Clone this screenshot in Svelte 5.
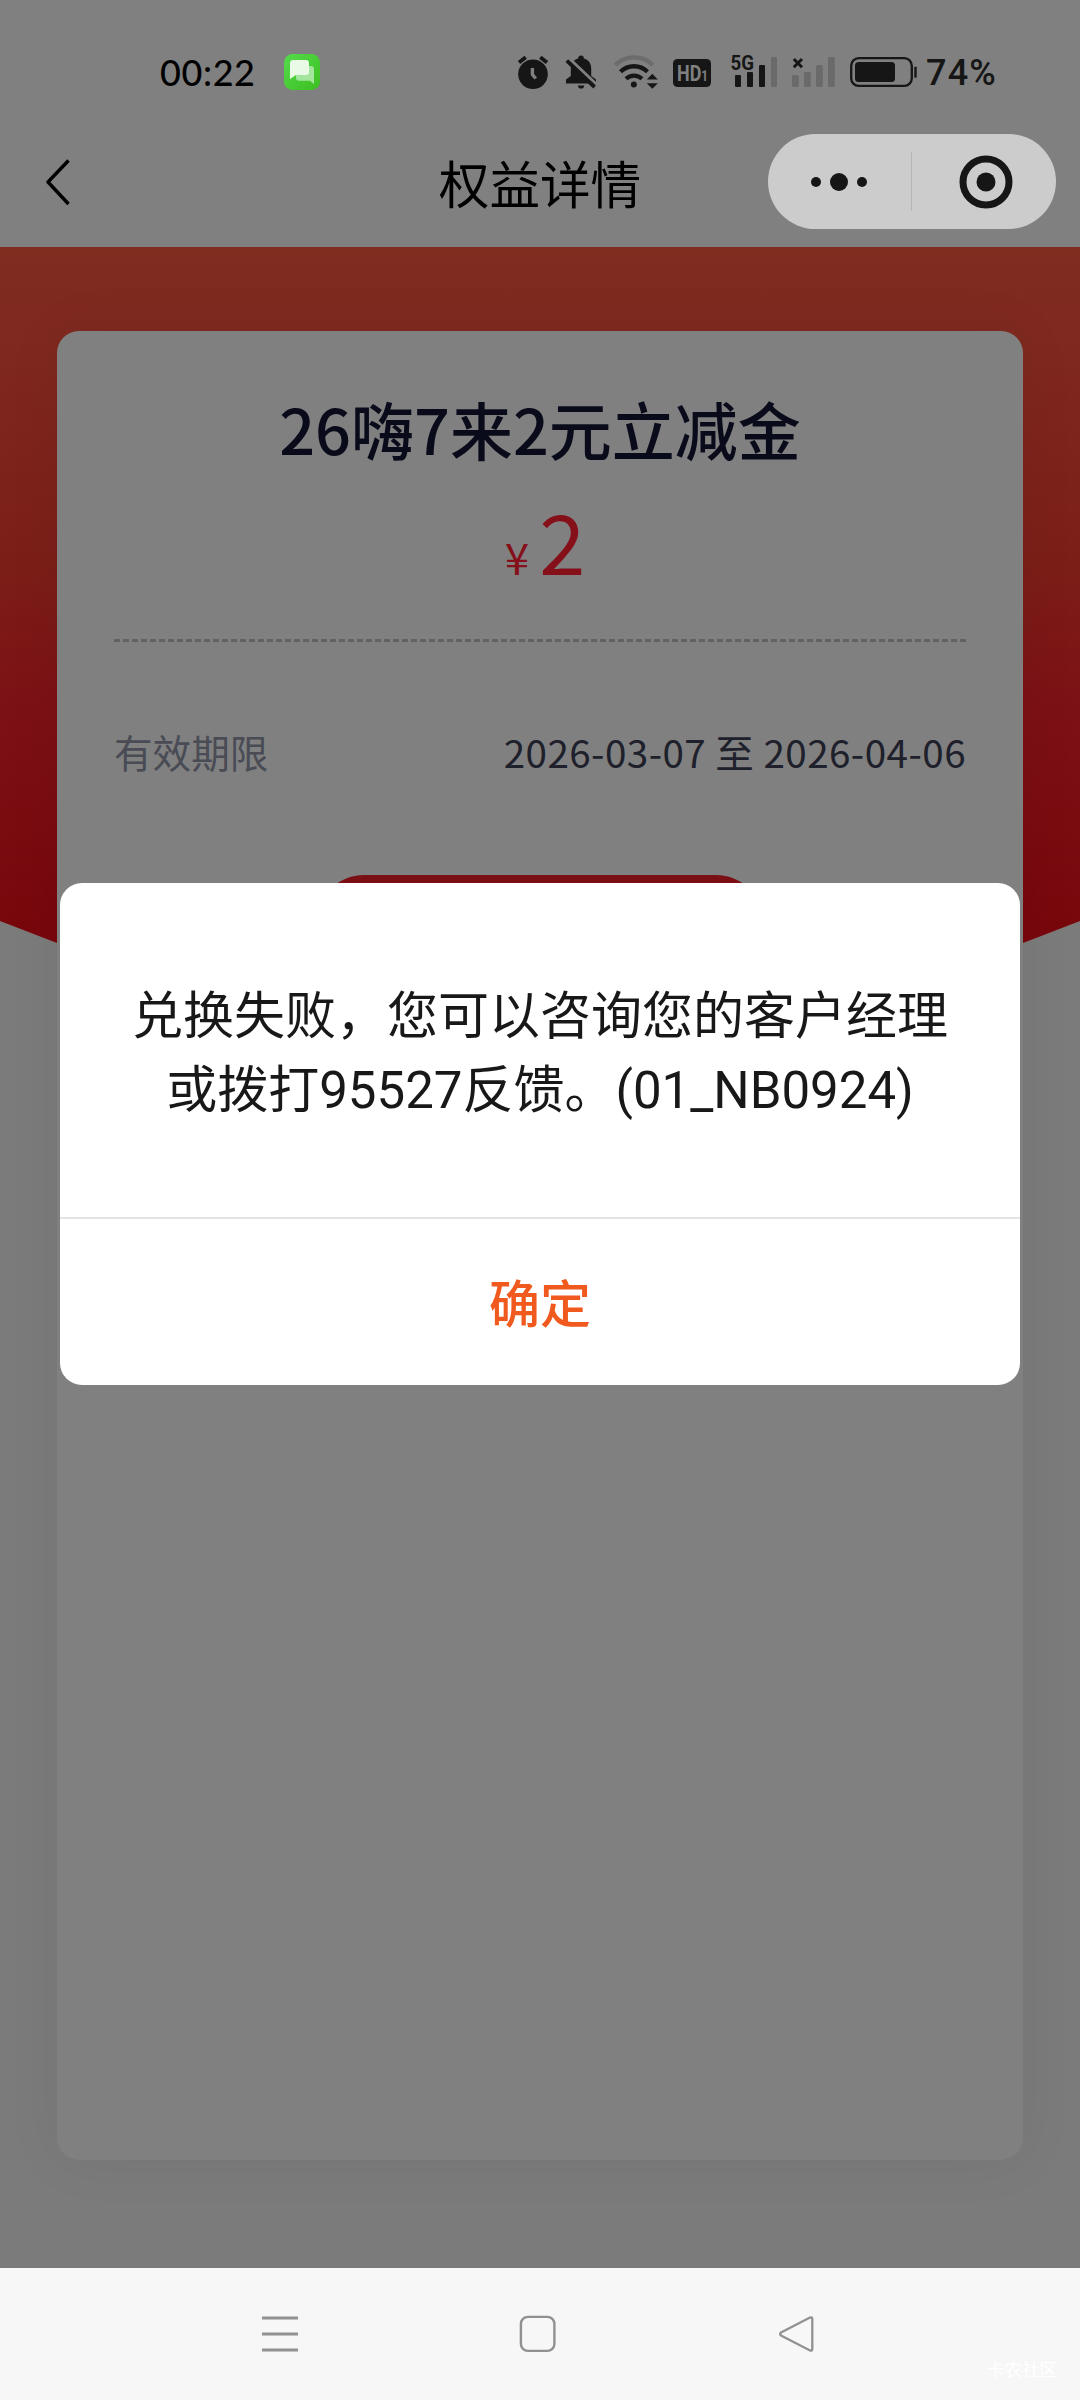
<script>
  const benefit = {
    title: '26嗨7来2元立减金',
    amount: '2',
    label: '有效期限',
    period: '2026-03-07 至 2026-04-06'
  };
  const message = ['兑换失败，您可以咨询您的客户经理', '或拨打95527反馈。(01_NB0924)'];
  const bars = [
    { x: 0, h: 12 },
    { x: 12, h: 15 },
    { x: 24, h: 22 },
    { x: 36, h: 30 }
  ];
</script>

<div class="screen">
  <div class="status">
    <span class="time">00:22</span>
    <svg class="chat" viewBox="0 0 36 36" width="36" height="36">
      <defs>
        <linearGradient id="green" x1="0" y1="0" x2="1" y2="1">
          <stop offset="0" stop-color="#55da4c" /><stop offset="1" stop-color="#3cbf20" />
        </linearGradient>
      </defs>
      <rect width="36" height="36" rx="8.5" fill="url(#green)" />
      <path d="M15 12h12a3 3 0 0 1 3 3v15l-4-3.200H15a3 3 0 0 1-3-3V15a3 3 0 0 1 3-3z" fill="#a4e59d" />
      <path d="M9 6h13a3 3 0 0 1 3 3v9a3 3 0 0 1-3 3H12l-6 4V9a3 3 0 0 1 3-3z" fill="#e9fbe7" />
    </svg>

    <svg class="alarm" viewBox="517 54 32 36" width="32" height="36">
      <circle cx="533" cy="74.300" r="14.800" fill="#161616" />
      <path d="M519 62.500l6.700-5.300M547 62.500l-6.700-5.300" stroke="#161616" stroke-width="3.800" />
      <path d="M532.400 68v6.500l3.300 4" fill="none" stroke="#808080" stroke-width="3.400" />
    </svg>
    <svg class="bell" viewBox="565 54 32 36" width="32" height="36">
      <path d="M566 83.500v-4l4.800-3.500V68c0-5 3-8.500 7.400-9.600a2.800 2.800 0 0 1 5.600 0c4.400 1.100 7.400 4.600 7.400 9.600v8l4.800 3.500v4z" fill="#161616" />
      <path d="M578 85.500h6.200a3.100 3.100 0 0 1-6.200 0z" fill="#161616" />
      <path d="M569 58.500l29 27.500" stroke="#808080" stroke-width="3.200" />
      <path d="M566.800 60.700l27.800 26.300" stroke="#161616" stroke-width="3.800" />
    </svg>
    <svg class="wifi" viewBox="613 54 46 36" width="46" height="36">
      <g fill="none" stroke-width="4.300">
        <path d="M615.200 65a27 27 0 0 1 37.600 0" stroke="#6c6c6c" />
        <path d="M620.500 71.800a19.200 19.200 0 0 1 27 0" stroke="#161616" />
        <path d="M626 78.800a11.500 11.500 0 0 1 16 0" stroke="#161616" />
      </g>
      <circle cx="633.800" cy="84.600" r="3" fill="#161616" />
      <path d="M646.800 79.600l5.500-5.800 5.500 5.800zM646.800 83.200l5.500 5.500 5.500-5.500z" fill="#161616" />
    </svg>
    <svg class="hd" viewBox="0 0 38 28" width="38" height="28">
      <rect width="38" height="28" rx="4.500" fill="#161616" />
      <text x="4" y="21.800" font-size="21.500" font-weight="700" textLength="31" lengthAdjust="spacingAndGlyphs" fill="#808080">HD<tspan font-size="14">1</tspan></text>
    </svg>
    <svg class="five" viewBox="-4 -2 47 34" width="47" height="34">
      {#each bars as b, i}
        <rect x={b.x} y={30 - b.h} width="6" height={b.h} rx="1" fill={i < 3 ? '#161616' : '#6a6a6a'} />
      {/each}
      <text x="-4.500" y="12.800" font-size="20.500" font-weight="700" textLength="23.500" lengthAdjust="spacingAndGlyphs" fill="#161616">5G</text>
    </svg>
    <svg class="none" viewBox="0 -2 43 34" width="43" height="34">
      {#each bars as b}
        <rect x={b.x} y={30 - b.h} width="6.800" height={b.h} rx="1.500" fill="#6a6a6a" />
      {/each}
      <path d="M1.800 2l8.200 8.200M10 2l-8.200 8.200" stroke="#161616" stroke-width="3" />
    </svg>
    <svg class="battery" viewBox="0 0 67 30" width="67" height="30">
      <rect x="1.200" y="1.200" width="60.600" height="27.600" rx="7.500" fill="none" stroke="#161616" stroke-width="2.300" />
      <rect x="5" y="5" width="40" height="20" rx="3.500" fill="#161616" />
      <rect x="64.300" y="9.700" width="2.400" height="11" rx="0.600" fill="#161616" />
    </svg>
    <span class="percent">74%</span>
  </div>

  <header class="nav">
    <svg class="back" viewBox="44 158 28 48" width="28" height="48">
      <path d="M68.500 160.500L48 182l20.500 22" fill="none" stroke="#000" stroke-width="3.400" stroke-linejoin="round" />
    </svg>
    <h1>权益详情</h1>
    <div class="capsule">
      <svg viewBox="0 0 50 20" width="50" height="20">
        <circle cx="5" cy="10" r="5" /><circle cx="28" cy="10" r="9" /><circle cx="51" cy="10" r="5" />
      </svg>
      <i></i>
      <svg viewBox="0 0 54 54" width="54" height="54">
        <circle cx="27" cy="27" r="23" fill="none" stroke="#161616" stroke-width="7" />
        <circle cx="27" cy="27" r="9.500" />
      </svg>
    </div>
  </header>

  <main>
    <section class="card">
      <h2>{benefit.title}</h2>
      <p class="price"><small>¥</small><span>{benefit.amount}</span></p>
      <div class="dashes"></div>
      <div class="row">
        <span class="label">{benefit.label}</span>
        <span class="value">{benefit.period}</span>
      </div>
      <div class="redeem"></div>
    </section>
  </main>

  <footer>
    <svg viewBox="0 0 36 38" width="36" height="38">
      <path d="M0 3h36M0 19h36M0 35h36" stroke="#919191" stroke-width="2.800" />
    </svg>
    <svg viewBox="0 0 38 38" width="38" height="38">
      <rect x="1.900" y="1.900" width="33.500" height="34" rx="7" fill="none" stroke="#919191" stroke-width="2.400" />
    </svg>
    <svg viewBox="0 0 38 38" width="38" height="38">
      <path d="M32 2.600L3.500 17.200Q.6 19 3.500 20.800L32 35.400Q34.300 36.200 34.300 34V4Q34.300 1.800 32 2.600z" fill="none" stroke="#919191" stroke-width="2.300" />
    </svg>
    <span class="mark">卡农社区</span>
  </footer>

  <div class="dialog">
    <div class="message">
      {#each message as line}<p>{line}</p>{/each}
    </div>
    <button>确定</button>
  </div>
</div>

<style>
  :global(body) { background: #808080; }
  .screen {
    position: relative;
    display: flex;
    flex-direction: column;
    width: 1080px;
    height: 2400px;
    overflow: hidden;
    background: #808080;
    font-family: 'Noto Sans CJK SC', sans-serif;
  }
  h1, h2, p { margin: 0; font-weight: 400; white-space: nowrap; }
  svg { flex: none; display: block; overflow: visible; }

  .status {
    display: flex;
    align-items: center;
    height: 54px;
    padding: 45px 0 21px 160px;
  }
  .status text { font-family: Roboto, sans-serif; }
  .time { width: 124px; font: 500 36px/54px Lato, sans-serif; letter-spacing: 0.6px; color: #000; }
  .alarm { margin-left: 197px; }
  .bell { margin-left: 16px; }
  .wifi { margin-left: 16px; }
  .hd { margin: 2px 0 0 14px; }
  .five { margin-left: 20px; }
  .none { margin-left: 14px; }
  .battery { margin-left: 15px; }
  .percent { margin: 2px 0 0 9px; font: 500 36px/54px Roboto, sans-serif; letter-spacing: 1.2px; color: #161616; }

  .nav {
    display: grid;
    grid-template-columns: 1fr auto 1fr;
    align-items: center;
    height: 127px;
    padding: 0 24px 4px;
    box-sizing: border-box;
    background: #808080;
  }
  .back { margin-left: 20px; }
  .nav h1 { padding-top: 1px; font-size: 50.6px; line-height: 70px; color: #000; }
  .capsule {
    justify-self: end;
    display: flex;
    align-items: center;
    width: 288px;
    height: 95px;
    box-sizing: border-box;
    padding: 0 43px;
    border-radius: 48px;
    background: #ccc;
    fill: #161616;
  }
  .capsule i { width: 1px; height: 59px; margin: 0 47px 0 50px; background: #b5b5b5; }

  main {
    position: relative;
    z-index: 0;
    height: 2021px;
    box-sizing: border-box;
    padding: 84px 57px 108px;
    background: #7b7b7b;
  }
  main::before {
    content: '';
    position: absolute;
    z-index: -1;
    inset: 0 0 auto;
    height: 780px;
    background: linear-gradient(#802c1f 0, #7f2920 90px, #7c1e18 320px, #7c1115 460px, #78070c 680px);
    clip-path: polygon(0 0, 100% 0, 100% 674px, 1023px 696px, 800px 760px, 280px 760px, 57px 696px, 0 674px);
  }
  .card {
    display: flex;
    flex-direction: column;
    height: 1829px;
    box-sizing: border-box;
    padding: 50px 57px 0;
    border-radius: 22px;
    background: #808080;
    box-shadow: 0 0 60px rgba(0, 0, 0, 0.06);
  }
  h2 { font-size: 63px; font-weight: 500; line-height: 94px; text-align: center; color: #090b1b; }
  .price {
    display: flex;
    justify-content: center;
    align-items: baseline;
    gap: 10px;
    height: 122px;
    padding-left: 10px;
    margin-top: 3px;
    line-height: 122px;
    color: #85101a;
  }
  .price small { font-size: 44px; }
  .price span { font-size: 83px; }
  .dashes {
    height: 3px;
    margin-top: 39px;
    background: repeating-linear-gradient(90deg, #626262 0 6px, transparent 6px 9px);
  }
  .row {
    display: flex;
    justify-content: space-between;
    margin-top: 80px;
    font-size: 38.6px;
    line-height: 58px;
  }
  .label { color: #494b55; }
  .value { letter-spacing: 0.45px; color: #1e202b; }
  .redeem { width: 448px; height: 96px; margin: 95px auto 0; border-radius: 48px; background: #7a1015; }

  footer {
    position: relative;
    display: flex;
    flex: 1;
    align-items: center;
    gap: 221px;
    padding-left: 262px;
    background: #f7f7f7;
  }
  .mark { position: absolute; right: 23px; bottom: 17px; font-size: 17.5px; line-height: 28px; color: #fff; }

  .dialog {
    position: absolute;
    left: 60px;
    top: 883px;
    display: flex;
    flex-direction: column;
    width: 960px;
    height: 502px;
    border-radius: 22px;
    background: #fff;
  }
  .message {
    height: 336px;
    padding-top: 97px;
    box-sizing: border-box;
    border-bottom: 2px solid #e3e3e3;
    font-family: Roboto, 'Noto Sans CJK SC', sans-serif;
    font-size: 51px;
    line-height: 74px;
    text-align: center;
    color: #181818;
  }
  button {
    flex: 1;
    padding: 0 0 3px;
    border: 0;
    background: none;
    font: 500 51px/74px 'Noto Sans CJK SC', sans-serif;
    color: #f05a1e;
  }
</style>
